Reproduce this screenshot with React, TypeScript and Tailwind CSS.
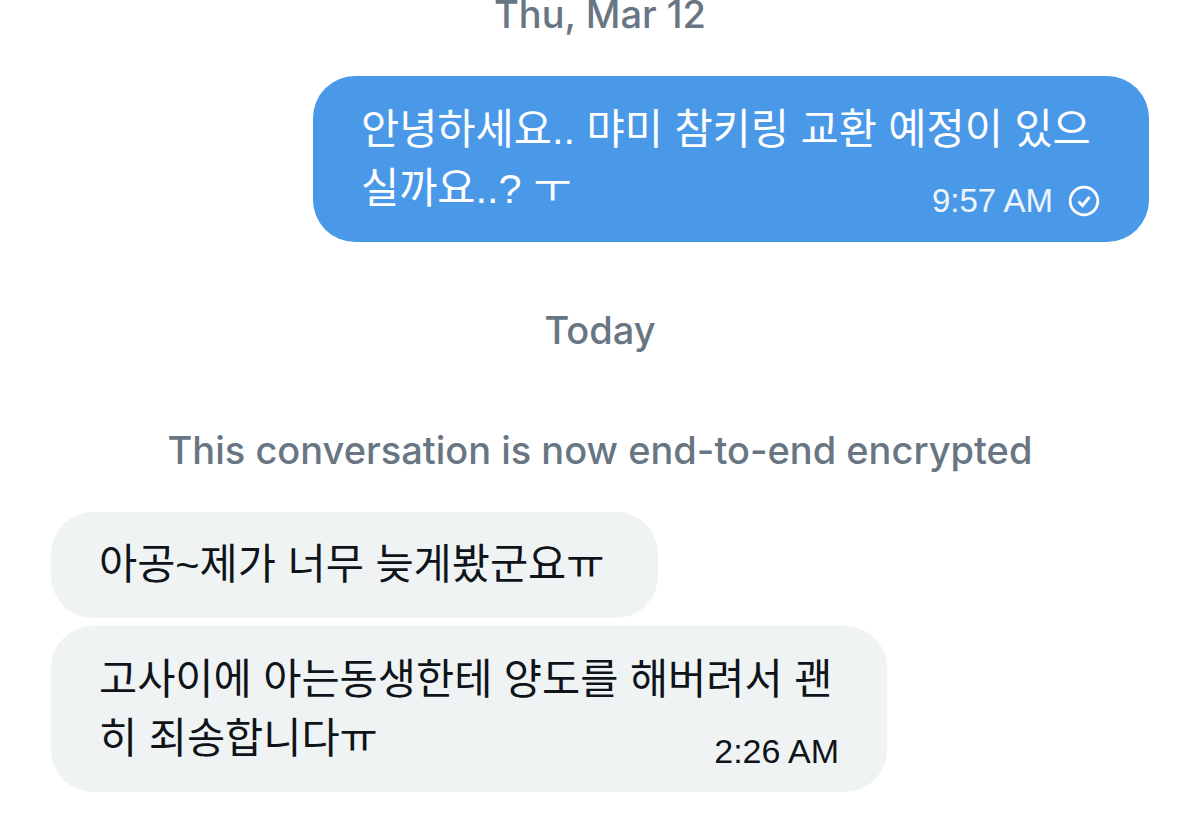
const bubbleFont = "font-['Liberation_Sans','Noto_Sans_CJK_KR',sans-serif]";
const labelClass = "text-center font-['Inter',sans-serif] text-[38px] leading-[44px] font-medium text-[#687684]";

function SentCheck() {
  return (
    <svg width="32" height="32" viewBox="0 0 32 32" fill="none" className="ml-[15px] shrink-0">
      <circle cx="16" cy="16" r="13.8" stroke="#fff" strokeWidth="2.8" />
      <path d="M10.5 16.5l4 4 7-8.5" stroke="#fff" strokeWidth="3" fill="none" />
    </svg>
  );
}

export default function App() {
  return (
    <div className={`flex h-[817px] w-[1200px] flex-col overflow-hidden bg-white ${bubbleFont}`}>
      <div className={`mt-[-8px] ${labelClass}`}>Thu, Mar 12</div>

      <div className="mt-[40px] flex justify-end pr-[51px]">
        <div className="w-[836px] rounded-[42px] bg-[#4a99e9] pt-[24px] pr-[49px] pb-[21px] pl-[48px] text-white">
          <div className="text-[41.5px] leading-[59px] whitespace-nowrap">안녕하세요.. 먀미 참키링 교환 예정이 있으</div>
          <div className="flex items-end justify-between">
            <div className="pb-[3px] text-[41.5px] leading-[59px]">실까요..? ㅜ</div>
            <div className="flex items-center text-[33px] leading-[40px] text-white/90">
              9:57 AM
              <SentCheck />
            </div>
          </div>
        </div>
      </div>

      <div className={`mt-[66px] ${labelClass}`}>Today</div>
      <div className={`mt-[76px] ${labelClass}`}>This conversation is now end-to-end encrypted</div>

      <div className="mt-[40px] flex flex-col items-start gap-[8px] pl-[51px] text-[#0f1419]">
        <div className="w-[607px] rounded-[42px] bg-[#eff3f4] px-[48px] py-[24px] text-[41.5px] leading-[58px] whitespace-nowrap">
          아공~제가 너무 늦게봤군요ㅠ
        </div>
        <div className="w-[836px] rounded-[42px] bg-[#eff3f4] pt-[24px] pr-[48px] pb-[21px] pl-[48px]">
          <div className="text-[41.5px] leading-[59px] whitespace-nowrap">고사이에 아는동생한테 양도를 해버려서 괜</div>
          <div className="flex items-end justify-between">
            <div className="pb-[3px] text-[41.5px] leading-[59px]">히 죄송합니다ㅠ</div>
            <div className="text-[34px] leading-[40px]">2:26 AM</div>
          </div>
        </div>
      </div>
    </div>
  );
}
